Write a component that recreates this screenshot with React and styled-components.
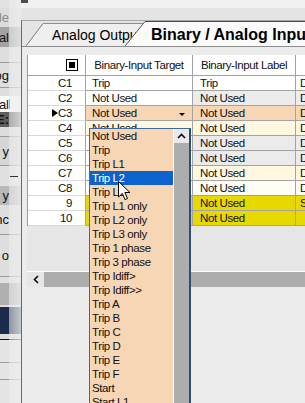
import styled, { createGlobalStyle } from 'styled-components';

const PEACH = '#f6d6b4';
const CREAM = '#fff7df';
const YELLOW = '#e7d800';

const rows = [
  { id: 'C1', target: 'Trip', label: 'Trip', code: 'D', tBg: '#fff', lBg: '#fff' },
  { id: 'C2', target: 'Not Used', label: 'Not Used', code: 'D', tBg: '#fff', lBg: '#ececec' },
  { id: 'C3', target: 'Not Used', label: 'Not Used', code: 'D', tBg: PEACH, lBg: PEACH, current: true },
  { id: 'C4', target: 'Not Used', label: 'Not Used', code: 'D', tBg: CREAM, lBg: CREAM },
  { id: 'C5', target: 'Not Used', label: 'Not Used', code: 'D', tBg: '#fff', lBg: '#ebebeb' },
  { id: 'C6', target: 'Not Used', label: 'Not Used', code: 'D', tBg: '#fff', lBg: '#ebebeb' },
  { id: 'C7', target: 'Not Used', label: 'Not Used', code: 'D', tBg: '#fff', lBg: CREAM },
  { id: 'C8', target: 'Not Used', label: 'Not Used', code: 'D', tBg: '#fff', lBg: '#fffdf4' },
  { id: '9', target: 'Not Used', label: 'Not Used', code: 'S', tBg: YELLOW, lBg: YELLOW },
  { id: '10', target: 'Not Used', label: 'Not Used', code: '', tBg: YELLOW, lBg: YELLOW },
];

const options = [
  'Not Used', 'Trip', 'Trip L1', 'Trip L2', 'Trip L3', 'Trip L1 only', 'Trip L2 only',
  'Trip L3 only', 'Trip 1 phase', 'Trip 3 phase', 'Trip Idiff>', 'Trip Idiff>>',
  'Trip A', 'Trip B', 'Trip C', 'Trip D', 'Trip E', 'Trip F', 'Start', 'Start L1', 'Start L2',
];

// cut-off panel on the far left, top to bottom
const leftRows = [
  { h: 8, bg: '#e2e2e2' },
  { h: 19, bg: '#dcdcdc', text: 'de', color: '#8a8a8a' },
  { h: 20, bg: '#a3a3a3', text: 'al' },
  { h: 16, bg: '#dedede', line: '#9a9a9a' },
  { h: 25, bg: '#dedede', text: 'og', line: '#9a9a9a' },
  { h: 8, bg: '#dedede' },
  { h: 16, bg: '#fafafa', text: 'al', caret: true },
  { h: 15, bg: '#5e5e5e', text: 'E:', bold: true },
  { h: 10, bg: '#dcdcdc', line: '#9a9a9a' },
  { h: 29, bg: '#d6d6d6', text: 'y', line: '#9a9a9a' },
  { h: 20, bg: '#e0e0e0', dash: true },
  { h: 19, bg: '#b8b8b8', text: 'y' },
  { h: 30, bg: '#dedede', text: 'nc', line: '#9a9a9a' },
  { h: 42, bg: '#dedede', text: 'o', line: '#9a9a9a' },
  { h: 6, bg: '#e0e0e0' },
  { h: 22, bg: '#b0b0b0' },
  { h: 2, bg: '#dedede' },
  { h: 27, bg: '#1c2b4a' },
  { h: 6, bg: '#dcdcdc', line: '#111' },
  { h: 23, bg: '#e4e4e4', line: '#9a9a9a' },
  { h: 17, bg: '#e4e4e4', line: '#9a9a9a' },
  { h: 60, bg: '#e4e4e4' },
];

export default function App() {
  return (
    <>
      <GlobalStyle />
      <Page>
        <LeftStrip>
          {leftRows.map((r, i) => (
            <LeftRow key={i} $h={r.h} $bg={r.bg} $line={r.line} $color={r.color} $bold={r.bold}>
              {r.text}
              {r.caret && <Caret />}
              {r.dash && <Dash />}
            </LeftRow>
          ))}
        </LeftStrip>

        <Main>
          <TitleStrip>
            <TitleIcon />
          </TitleStrip>

          <Panel>
            <TabStrip>
              <Tab>
                <svg width="17" height="23" viewBox="0 0 17 23">
                  <polygon points="0,23 17,0 17,23" fill="#efefef" />
                  <line x1="0" y1="23" x2="17" y2="0.5" stroke="#7a7a7a" strokeWidth="1" />
                </svg>
                <TabBody>Analog Output</TabBody>
              </Tab>
              <Tab $active>
                <svg width="20" height="25" viewBox="0 0 20 25">
                  <polygon points="0,25 20,0 20,25" fill="#fbfbfb" />
                  <line x1="0" y1="25" x2="20" y2="0.5" stroke="#555" strokeWidth="1" />
                </svg>
                <TabBody $active>Binary / Analog Input</TabBody>
              </Tab>
            </TabStrip>

            <Content>
              <GridWrap>
                <Table>
                  <Row $h={21}>
                    <HeadCell $corner>
                      <SelectAll>
                        <span />
                      </SelectAll>
                    </HeadCell>
                    <HeadCell>Binary-Input Target</HeadCell>
                    <HeadCell>Binary-Input Label</HeadCell>
                    <HeadCell />
                  </Row>
                  {rows.map((r) => (
                    <Row key={r.id} $h={15}>
                      <RowHead>
                        {r.current && <CurrentMark />}
                        {r.id}
                      </RowHead>
                      <Cell $bg={r.tBg} $combo={r.current}>
                        {r.target}
                        {r.current && <DropArrow />}
                      </Cell>
                      <Cell $bg={r.lBg} $pad={7}>{r.label}</Cell>
                      <Cell $bg={r.lBg} $pad={4}>{r.code}</Cell>
                    </Row>
                  ))}
                </Table>

                <GridEmpty />

                <HScroll>
                  <ScrollBtn>
                    <svg width="6" height="9" viewBox="0 0 6 9">
                      <polyline points="5,1 1.5,4.5 5,8" fill="none" stroke="#111" strokeWidth="1.7" />
                    </svg>
                  </ScrollBtn>
                  <ScrollThumb />
                </HScroll>

                <Dropdown>
                  <DropList>
                    {options.map((o) => (
                      <Option key={o} $selected={o === 'Trip L2'}>{o}</Option>
                    ))}
                  </DropList>
                  <VScroll>
                    <UpBtn>
                      <svg width="9" height="6" viewBox="0 0 9 6">
                        <polyline points="1,5 4.5,1.5 8,5" fill="none" stroke="#111" strokeWidth="1.7" />
                      </svg>
                    </UpBtn>
                    <VThumb />
                  </VScroll>
                  <Cursor width="13" height="20" viewBox="0 0 13 20">
                    <path
                      d="M0.5 0.5 L0.5 16 L4.3 12.4 L7 18.6 L9.5 17.5 L6.9 11.5 L12 11.5 Z"
                      fill="#fff"
                      stroke="#000"
                      strokeWidth="1"
                      strokeLinejoin="round"
                    />
                  </Cursor>
                </Dropdown>
              </GridWrap>
            </Content>
          </Panel>
        </Main>
      </Page>
    </>
  );
}

const GlobalStyle = createGlobalStyle`
  html, body {
    margin: 0;
    padding: 0;
  }
  body {
    background: #e4e4e4;
    font-family: "Liberation Sans", Arial, sans-serif;
  }
`;

const Page = styled.div`
  width: 305px;
  height: 403px;
  display: flex;
  overflow: hidden;
  background: #e4e4e4;
`;

const LeftStrip = styled.div`
  position: relative;
  width: 21px;
  flex: none;
  display: flex;
  flex-direction: column;
  overflow: hidden;

  &::after {
    content: '';
    position: absolute;
    top: 0;
    bottom: 0;
    left: 9px;
    width: 12px;
    background: linear-gradient(to right, rgba(236, 236, 236, 0.55), rgba(238, 238, 238, 0.8));
  }
`;

const LeftRow = styled.div`
  height: ${(p) => p.$h}px;
  flex: none;
  box-sizing: border-box;
  background: ${(p) => p.$bg};
  border-bottom: ${(p) => (p.$line ? `1px solid ${p.$line}` : 'none')};
  display: flex;
  align-items: center;
  justify-content: flex-end;
  padding-right: 12px;
  font-size: 13px;
  font-weight: ${(p) => (p.$bold ? 700 : 400)};
  color: ${(p) => p.$color || '#111'};
  white-space: nowrap;
  position: relative;
`;

const Caret = styled.span`
  position: absolute;
  left: 9px;
  top: 3px;
  width: 1px;
  height: 10px;
  background: #3a6fd8;
`;

const Dash = styled.span`
  position: absolute;
  left: 10px;
  top: 10px;
  width: 8px;
  height: 1px;
  background: #333;
  z-index: 1;
`;

const Main = styled.div`
  flex: 1;
  min-width: 0;
  display: flex;
  flex-direction: column;
`;

const TitleStrip = styled.div`
  height: 8px;
  flex: none;
  background: #f0f0f0;
  display: flex;
  align-items: flex-start;
`;

const TitleIcon = styled.span`
  width: 7px;
  height: 3px;
  background: #4d4d4d;
`;

const Panel = styled.div`
  flex: 1;
  margin-top: 12px;
  border-top: 1px solid #a6a6a6;
  border-left: 1px solid #6a6a6a;
  display: flex;
  flex-direction: column;
  overflow: hidden;
  background: #e8e8e8;
`;

const TabStrip = styled.div`
  height: 26px;
  flex: none;
  box-sizing: border-box;
  border-bottom: 1px solid #8c8c8c;
  display: flex;
  align-items: flex-end;
  padding-left: 4px;
  background: #e4e4e4;

  svg {
    display: block;
    flex: none;
  }
`;

const Tab = styled.div`
  display: flex;
  height: ${(p) => (p.$active ? 25 : 23)}px;
  flex: ${(p) => (p.$active ? 1 : 'none')};
  margin-left: ${(p) => (p.$active ? -20 : 0)}px;
  position: relative;
  z-index: ${(p) => (p.$active ? 1 : 0)};
`;

const TabBody = styled.div`
  box-sizing: border-box;
  border-top: 1px solid ${(p) => (p.$active ? '#4a4a4a' : '#8c8c8c')};
  background: ${(p) => (p.$active ? '#fbfbfb' : '#efefef')};
  width: ${(p) => (p.$active ? 'auto' : '102px')};
  flex: ${(p) => (p.$active ? 1 : 'none')};
  padding-left: ${(p) => (p.$active ? 6 : 9)}px;
  font-size: ${(p) => (p.$active ? 16 : 14)}px;
  font-weight: ${(p) => (p.$active ? 700 : 400)};
  line-height: ${(p) => (p.$active ? 25 : 22)}px;
  color: #000;
  white-space: nowrap;
  overflow: hidden;
`;

const Content = styled.div`
  flex: 1;
  padding: 8px 0 0 5px;
  background: #ececec;
`;

const GridWrap = styled.div`
  position: relative;
  display: flex;
  flex-direction: column;
`;

const Table = styled.div`
  border-left: 1px solid #9a9a9a;
  background: #fff;
  width: max-content;
`;

const Row = styled.div`
  display: grid;
  grid-template-columns: 58px 107px 103px 80px;
  height: ${(p) => p.$h}px;
`;

const cellBase = `
  box-sizing: border-box;
  display: flex;
  align-items: center;
  font-size: 11.5px;
  letter-spacing: -0.4px;
  color: #111;
  white-space: nowrap;
  overflow: hidden;
  border-right: 1px solid #a3a3a3;
`;

const HeadCell = styled.div`
  ${cellBase}
  background: #fff;
  border-bottom: 1px solid #a3a3a3;
  justify-content: ${(p) => (p.$corner ? 'flex-end' : 'center')};
  padding-right: ${(p) => (p.$corner ? 7 : 0)}px;
`;

const SelectAll = styled.span`
  box-sizing: border-box;
  width: 12px;
  height: 12px;
  border: 1px solid #000;
  display: flex;
  align-items: center;
  justify-content: center;

  span {
    width: 6px;
    height: 6px;
    background: #000;
  }
`;

const RowHead = styled.div`
  ${cellBase}
  background: #fff;
  border-bottom: 1px solid #d9d9d9;
  justify-content: flex-end;
  padding-right: 13px;
`;

const CurrentMark = styled.span`
  width: 0;
  height: 0;
  border-left: 6px solid #000;
  border-top: 4px solid transparent;
  border-bottom: 4px solid transparent;
`;

const Cell = styled.div`
  ${cellBase}
  background: ${(p) => p.$bg};
  border-bottom: 1px solid #a3a3a3;
  padding-left: ${(p) => p.$pad || 6}px;
  padding-right: 7px;
  justify-content: ${(p) => (p.$combo ? 'space-between' : 'flex-start')};
`;

const DropArrow = styled.span`
  width: 0;
  height: 0;
  margin-top: 3px;
  border-left: 3px solid transparent;
  border-right: 3px solid transparent;
  border-top: 3px solid #000;
`;

const GridEmpty = styled.div`
  height: 45px;
  background: #e6e6e6;
`;

const HScroll = styled.div`
  height: 16px;
  box-sizing: border-box;
  border-top: 1px solid #fff;
  display: flex;
`;

const ScrollBtn = styled.div`
  width: 17px;
  flex: none;
  background: #e6e6e6;
  display: flex;
  align-items: center;
  justify-content: center;
`;

const ScrollThumb = styled.div`
  flex: 1;
  background: #adadad;
`;

const Dropdown = styled.div`
  position: absolute;
  left: 62px;
  top: 73px;
  height: 290px;
  display: flex;
  border-left: 1px solid #3d6b9c;
  border-top: 1px solid #3d6b9c;
  border-right: 2px solid #2b4e75;
  background: ${PEACH};
  z-index: 2;
`;

const DropList = styled.div`
  width: 83px;
  flex: none;
  display: flex;
  flex-direction: column;
  border-right: 1px solid #fff;
`;

const Option = styled.div`
  height: 14px;
  flex: none;
  line-height: 14px;
  padding-left: 2px;
  font-size: 11.5px;
  letter-spacing: -0.4px;
  white-space: nowrap;
  background: ${(p) => (p.$selected ? '#0c63ce' : 'transparent')};
  color: ${(p) => (p.$selected ? '#fff' : '#111')};
`;

const VScroll = styled.div`
  width: 15px;
  flex: none;
  display: flex;
  flex-direction: column;
`;

const UpBtn = styled.div`
  height: 14px;
  background: #e9e9e9;
  display: flex;
  align-items: center;
  justify-content: center;
`;

const VThumb = styled.div`
  flex: 1;
  background: #adadad;
`;

const Cursor = styled.svg`
  position: absolute;
  left: 28px;
  top: 52px;
  z-index: 3;
`;
